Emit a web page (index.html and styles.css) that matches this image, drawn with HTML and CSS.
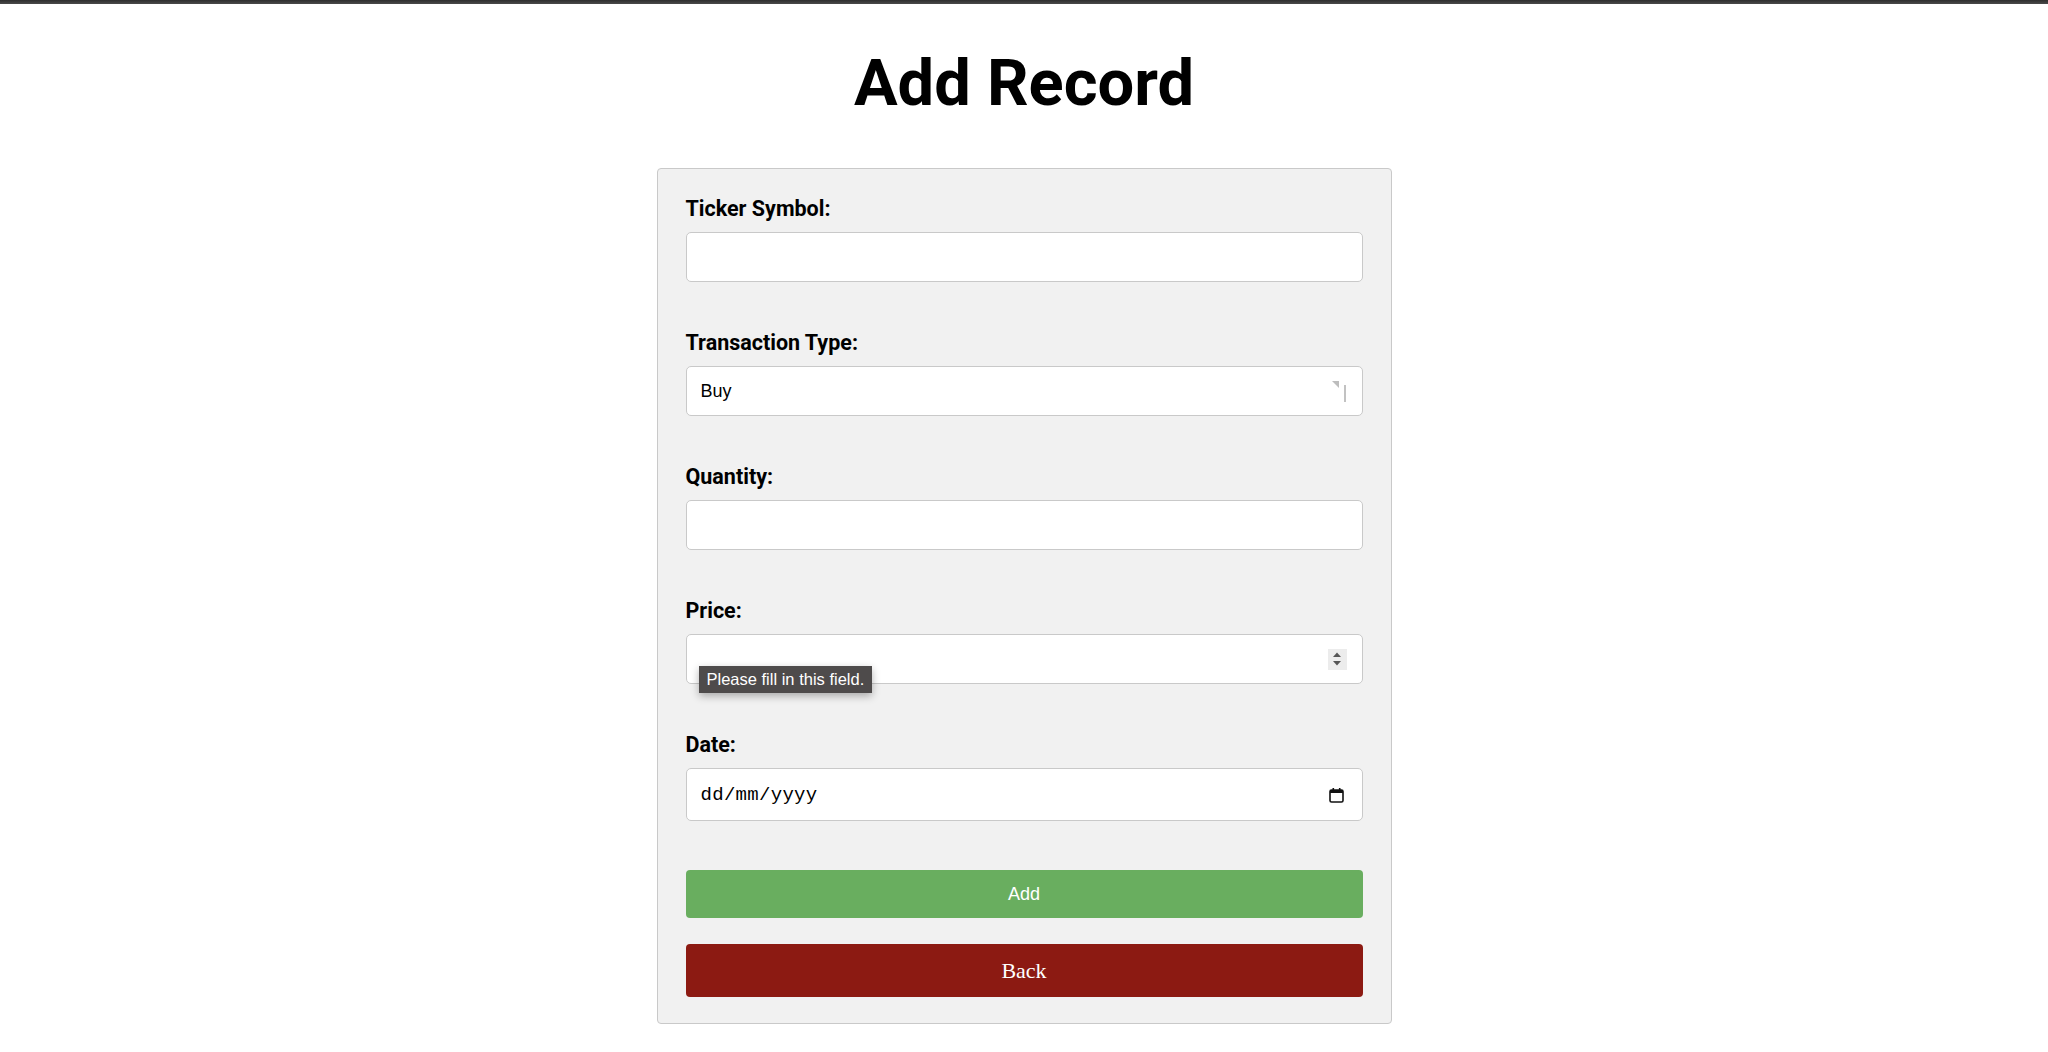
FILE: index.html
```html
<!DOCTYPE html>
<html lang="en">
<head>
    <meta charset="UTF-8">
    <meta name="viewport" content="width=device-width, initial-scale=1.0">
    <title>Add Record</title>
    <link rel="stylesheet" href="styles.css">
</head>
<body>
    <div class="topbar"></div>
    <h1>Add Record</h1>
    <form class="card" id="recordForm">
        <div class="group">
            <label for="ticker">Ticker Symbol:</label>
            <input type="text" id="ticker" name="ticker" class="field">
        </div>
        <div class="group">
            <label>Transaction Type:</label>
            <div class="field select">
                <span>Buy</span>
                <svg class="select-arrow" width="16" height="24" viewBox="0 0 16 24">
                    <path d="M0 2 L7 2 L7 9 Z" fill="#bdbdbd"/>
                    <rect x="12" y="6" width="2" height="17" fill="#c2c2c2"/>
                </svg>
            </div>
        </div>
        <div class="group">
            <label for="quantity">Quantity:</label>
            <input type="text" id="quantity" name="quantity" class="field">
        </div>
        <div class="group">
            <label>Price:</label>
            <div class="field price">
                <span></span>
                <span class="spinner">
                    <svg width="10" height="16" viewBox="0 0 10 16">
                        <path d="M1 6 L5 1.5 L9 6 Z" fill="#555"/>
                        <path d="M1 10 L5 14.5 L9 10 Z" fill="#555"/>
                    </svg>
                </span>
                <div class="tooltip">Please fill in this field.</div>
            </div>
        </div>
        <div class="group">
            <label>Date:</label>
            <div class="field date">
                <span class="date-text">dd/mm/yyyy</span>
                <svg width="15" height="16" viewBox="0 0 15 16">
                    <rect x="1" y="3" width="13" height="12" rx="1.5" fill="none" stroke="#111" stroke-width="1.6"/>
                    <rect x="1" y="3" width="13" height="3" fill="#111"/>
                    <rect x="3.5" y="1" width="1.6" height="3" fill="#111"/>
                    <rect x="9.9" y="1" width="1.6" height="3" fill="#111"/>
                </svg>
            </div>
        </div>
        <button type="button" class="btn-add">Add</button>
        <button type="button" class="btn-back">Back</button>
    </form>
</body>
</html>
```

FILE: styles.css
```css
/* General Styles */
body {
    margin: 0;
    padding: 0;
    font-family: 'Roboto', 'Liberation Sans', sans-serif;
    background-color: #fff;
    color: #000;
}
.topbar {
    height: 4px;
    background: linear-gradient(180deg, #2e2e2e, #4a4a4a);
}
h1 {
    margin: 42px 0 47px;
    font-size: 65px;
    line-height: 75px;
    font-weight: 700;
    text-align: center;
}
.card {
    width: 735px;
    box-sizing: border-box;
    margin: 0 auto;
    padding: 28px 28px 26px;
    background-color: #f1f1f1;
    border: 1px solid #c9c9c9;
    border-radius: 4px;
}
.group {
    margin-bottom: 49px;
}
label {
    display: block;
    font-size: 21.5px;
    line-height: 24px;
    font-weight: 700;
    margin-bottom: 11px;
}
.field {
    display: block;
    width: 100%;
    height: 50px;
    box-sizing: border-box;
    margin: 0;
    padding: 0 14px;
    background: #fff;
    border: 1px solid #c9c9c9;
    border-radius: 5px;
    font-family: 'Liberation Sans', sans-serif;
    font-size: 18px;
    outline: none;
}
.select,
.price,
.date {
    display: flex;
    align-items: center;
    justify-content: space-between;
}
.price {
    position: relative;
}
.spinner {
    display: flex;
    align-items: center;
    justify-content: center;
    width: 19px;
    height: 21px;
    background: #ececec;
    margin-right: 1px;
}
.tooltip {
    position: absolute;
    left: 12px;
    top: 31px;
    height: 27px;
    padding: 0 8px;
    background: #4e4b4b;
    color: #fff;
    font-family: 'Liberation Sans', sans-serif;
    font-size: 16.5px;
    line-height: 27px;
    white-space: nowrap;
    box-shadow: 0 3px 8px rgba(0, 0, 0, 0.3);
}
.date {
    height: 53px;
}
.date-text {
    font-family: 'Liberation Mono', monospace;
    font-size: 19px;
    letter-spacing: 0.3px;
}
.date svg {
    margin-right: 4px;
}
button {
    display: block;
    width: 100%;
    border: none;
    border-radius: 4px;
    color: #fff;
    cursor: pointer;
}
.btn-add {
    height: 48px;
    margin-bottom: 26px;
    background-color: #69ae5f;
    font-family: 'Liberation Sans', sans-serif;
    font-size: 18px;
}
.btn-add:hover {
    background-color: #5c9c53;
}
.btn-back {
    height: 53px;
    background-color: #8c1a12;
    font-family: 'Liberation Serif', serif;
    font-size: 22px;
}
.btn-back:hover {
    background-color: #76150f;
}
```
